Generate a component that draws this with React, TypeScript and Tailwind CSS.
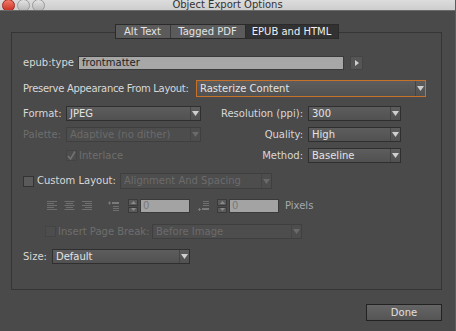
import React from "react";

const font = { fontFamily: '"DejaVu Sans", "Noto Sans", sans-serif' };

function Select({
  value,
  w,
  disabled = false,
  focus = false,
  h = "h-[15px]",
}: {
  value: string;
  w: string;
  disabled?: boolean;
  focus?: boolean;
  h?: string;
}) {
  return (
    <div
      className={`${w} ${h} shrink-0 flex items-center border ${
        focus
          ? "border-[#c8712a] bg-gradient-to-b from-[#5d5d5d] to-[#515151]"
          : disabled
          ? "border-[#3f3f3f] bg-[#4d4d4d]"
          : "border-[#2f2f2f] bg-gradient-to-b from-[#5d5d5d] to-[#515151]"
      }`}
    >
      <span
        className={`flex-1 pl-[3px] text-[10px] leading-none truncate ${
          disabled ? "text-[#6b6b6b]" : "text-[#e4e4e4]"
        }`}
      >
        {value}
      </span>
      <span
        className={`h-full w-[10px] flex items-center justify-center border-l ${
          disabled ? "border-[#454545]" : "border-[#444]"
        }`}
      >
        <svg width="7" height="5" viewBox="0 0 7 5">
          <path d="M0 0h7L3.5 5z" fill={disabled ? "#6a6a6a" : "#cfcfcf"} />
        </svg>
      </span>
    </div>
  );
}

function Check({ on = false, dim = false }: { on?: boolean; dim?: boolean }) {
  return (
    <div
      className={`w-[11px] h-[11px] shrink-0 border flex items-center justify-center ${
        dim ? "border-[#444] bg-[#4d4d4d]" : "border-[#333] bg-[#5a5a5a]"
      }`}
    >
      {on && (
        <svg width="9" height="9" viewBox="0 0 9 9">
          <path d="M1 5l2.5 3L8 0.5" stroke="#727272" strokeWidth="1.6" fill="none" />
        </svg>
      )}
    </div>
  );
}

function Lines({ kind }: { kind: "l" | "c" | "r" }) {
  const rows = [10, 7, 10, 7, 10];
  return (
    <svg width="11" height="10" viewBox="0 0 11 10">
      {rows.map((len, i) => {
        const x = kind === "l" ? 0 : kind === "c" ? (11 - len) / 2 : 11 - len;
        return <rect key={i} x={x} y={i * 2} width={len} height="1" fill="#6f6f6f" />;
      })}
    </svg>
  );
}

function Spinner() {
  return (
    <div className="w-[10px] h-[14px] flex flex-col gap-px">
      <div className="flex-1 bg-[#5a5a5a] border border-[#3a3a3a] flex items-center justify-center">
        <svg width="5" height="3" viewBox="0 0 5 3">
          <path d="M0 3h5L2.5 0z" fill="#8a8a8a" />
        </svg>
      </div>
      <div className="flex-1 bg-[#5a5a5a] border border-[#3a3a3a] flex items-center justify-center">
        <svg width="5" height="3" viewBox="0 0 5 3">
          <path d="M0 0h5L2.5 3z" fill="#8a8a8a" />
        </svg>
      </div>
    </div>
  );
}

export default function App() {
  return (
    <div
      className="w-[456px] h-[331px] flex flex-col bg-[#4a4a4a] overflow-hidden border-r border-[#5c5c5c]"
      style={font}
    >
      {/* Title bar */}
      <div className="h-[11px] shrink-0 bg-gradient-to-b from-[#dcdcdc] to-[#cdcdcd] border-b border-[#6a6a6a] overflow-hidden flex items-end">
        <div className="flex gap-[2px] pl-[2px] mb-[-2px]">
          <span className="w-[13px] h-[13px] rounded-full bg-gradient-to-b from-[#f27a6c] to-[#c8281c] border border-[#9a2a20]" />
          <span className="w-[13px] h-[13px] rounded-full bg-gradient-to-b from-[#e4e4e4] to-[#b5b5b5] border border-[#9a9a9a]" />
          <span className="w-[13px] h-[13px] rounded-full bg-gradient-to-b from-[#e4e4e4] to-[#b5b5b5] border border-[#9a9a9a]" />
        </div>
        <div className="flex-1 h-full flex items-center justify-center text-[10px] leading-[10px] text-[#333] pr-[45px]">
          Object Export Options
        </div>
      </div>

      {/* Body */}
      <div className="flex-1 flex flex-col pl-[11px] pr-[13px] pt-[21px]">
        <div className="h-[258px] border border-[#353535] flex flex-col pl-[11px]">
          {/* Tabs */}
          <div className="flex justify-center -mt-[9px] mr-[11px]">
            <div className="flex h-[15px] border border-[#2b2b2b] text-[10px] leading-none">
              <div className="w-[55px] flex items-center justify-center bg-[#5b5b5b] text-[#e4e4e4] border-r border-[#3a3a3a]">
                Alt Text
              </div>
              <div className="w-[75px] flex items-center justify-center bg-[#5b5b5b] text-[#e4e4e4] border-r border-[#2b2b2b]">
                Tagged PDF
              </div>
              <div className="w-[92px] flex items-center justify-center bg-[#323232] text-[#f0f0f0]">
                EPUB and HTML
              </div>
            </div>
          </div>

          {/* epub:type */}
          <div className="mt-[17px] h-[14px] flex items-center">
            <span className="w-[55px] text-[10px] text-[#d8d8d8] leading-none">epub:type</span>
            <div className="w-[266px] h-[14px] bg-[#a7a7a7] border border-[#3a3a3a] flex items-center pl-[3px] text-[10px] text-[#1e1e1e] leading-none">
              frontmatter
            </div>
            <div className="ml-[6px] w-[13px] h-[14px] bg-[#555] border border-[#444] flex items-center justify-center">
              <svg width="4" height="6" viewBox="0 0 4 6">
                <path d="M0 0v6l4-3z" fill="#cfcfcf" />
              </svg>
            </div>
          </div>

          {/* Preserve appearance */}
          <div className="mt-[10px] h-[17px] flex items-center">
            <span className="w-[173px] shrink-0 whitespace-nowrap tracking-[-0.3px] text-[10px] text-[#d8d8d8] leading-none">
              Preserve Appearance From Layout:
            </span>
            <Select value="Rasterize Content" w="w-[230px]" h="h-[17px]" focus />
          </div>

          {/* Format / Resolution */}
          <div className="mt-[9px] h-[15px] flex items-center">
            <span className="w-[38px] text-right text-[10px] text-[#d8d8d8] leading-none">Format:</span>
            <div className="ml-[5px]">
              <Select value="JPEG" w="w-[135px]" />
            </div>
            <span className="w-[102px] text-right text-[10px] text-[#d8d8d8] leading-none">
              Resolution (ppi):
            </span>
            <div className="ml-[5px]">
              <Select value="300" w="w-[93px]" />
            </div>
          </div>

          {/* Palette / Quality */}
          <div className="mt-[6px] h-[15px] flex items-center">
            <span className="w-[38px] text-right text-[10px] text-[#6e6e6e] leading-none">Palette:</span>
            <div className="ml-[5px]">
              <Select value="Adaptive (no dither)" w="w-[135px]" disabled />
            </div>
            <span className="w-[102px] text-right text-[10px] text-[#d8d8d8] leading-none">Quality:</span>
            <div className="ml-[5px]">
              <Select value="High" w="w-[93px]" />
            </div>
          </div>

          {/* Interlace / Method */}
          <div className="mt-[6px] h-[15px] flex items-center">
            <div className="w-[178px] pl-[43px] flex items-center gap-[2px]">
              <Check on dim />
              <span className="text-[10px] text-[#6e6e6e] leading-none">Interlace</span>
            </div>
            <span className="w-[102px] text-right text-[10px] text-[#d8d8d8] leading-none">Method:</span>
            <div className="ml-[5px]">
              <Select value="Baseline" w="w-[93px]" />
            </div>
          </div>

          {/* Custom layout */}
          <div className="mt-[10px] h-[16px] flex items-center">
            <Check />
            <span className="ml-[3px] w-[83px] text-[10px] text-[#d8d8d8] leading-none">Custom Layout:</span>
            <Select value="Alignment And Spacing" w="w-[152px]" h="h-[16px]" disabled />
          </div>

          {/* Alignment / spacing */}
          <div className="mt-[10px] h-[14px] flex items-center pl-[24px]">
            <div className="flex gap-[6px]">
              <Lines kind="l" />
              <Lines kind="c" />
              <Lines kind="r" />
            </div>
            <svg className="ml-[16px]" width="12" height="11" viewBox="0 0 12 11">
              <path d="M0 2h3M1.5 0.5v3" stroke="#7a7a7a" strokeWidth="1" />
              <rect x="4" y="1" width="7" height="2" fill="#7a7a7a" />
              <rect x="5" y="5" width="6" height="1" fill="#6f6f6f" />
              <rect x="5" y="7" width="6" height="1" fill="#6f6f6f" />
              <rect x="5" y="9" width="6" height="1" fill="#6f6f6f" />
            </svg>
            <div className="ml-[8px]">
              <Spinner />
            </div>
            <div className="ml-[2px] w-[50px] h-[14px] bg-[#a3a3a3] border border-[#3a3a3a] pl-[2px] flex items-center text-[10px] text-[#7a7a7a] leading-none">
              0
            </div>
            <svg className="ml-[8px]" width="12" height="11" viewBox="0 0 12 11">
              <rect x="5" y="0" width="6" height="1" fill="#6f6f6f" />
              <rect x="5" y="2" width="6" height="1" fill="#6f6f6f" />
              <rect x="5" y="4" width="6" height="1" fill="#6f6f6f" />
              <path d="M0 8.5h3M1.5 7v3" stroke="#7a7a7a" strokeWidth="1" />
              <rect x="4" y="7" width="7" height="2" fill="#7a7a7a" />
            </svg>
            <div className="ml-[7px]">
              <Spinner />
            </div>
            <div className="ml-[2px] w-[50px] h-[14px] bg-[#a3a3a3] border border-[#3a3a3a] pl-[2px] flex items-center text-[10px] text-[#7a7a7a] leading-none">
              0
            </div>
            <span className="ml-[6px] text-[10px] text-[#a3a9b0] leading-none">Pixels</span>
          </div>

          {/* Insert page break */}
          <div className="mt-[11px] h-[15px] flex items-center pl-[22px]">
            <Check dim />
            <span className="ml-[2px] w-[94px] text-[10px] text-[#6e6e6e] leading-none">Insert Page Break:</span>
            <Select value="Before Image" w="w-[150px]" disabled />
          </div>

          {/* Size */}
          <div className="mt-[10px] h-[15px] flex items-center">
            <span className="w-[29px] text-[10px] text-[#d8d8d8] leading-none">Size:</span>
            <Select value="Default" w="w-[138px]" />
          </div>
        </div>

        {/* Done */}
        <div className="mt-[14px] flex justify-end">
          <div className="w-[76px] h-[17px] border border-[#222] bg-gradient-to-b from-[#656565] to-[#555] flex items-center justify-center text-[10px] text-[#e0e0e0] leading-none">
            Done
          </div>
        </div>
      </div>
    </div>
  );
}
